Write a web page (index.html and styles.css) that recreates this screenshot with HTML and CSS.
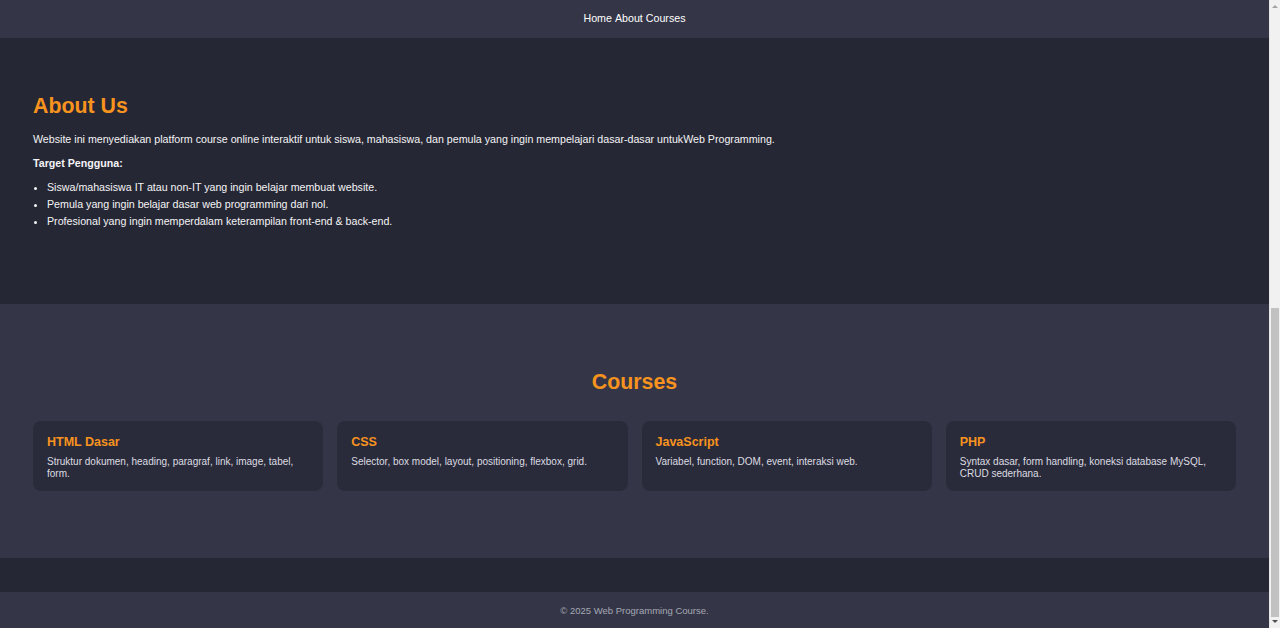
FILE: index.html
```html
<!DOCTYPE html>
<html lang="id">
<head>
<meta charset="utf-8">
<title>Web Programming Course</title>
<link rel="stylesheet" href="styles.css">
</head>
<body>
<div class="page">
  <header class="topbar">
    <nav class="nav">
      <a href="#home">Home</a>
      <a href="#about">About</a>
      <a href="#courses">Courses</a>
    </nav>
  </header>
  <main>
    <section class="about" id="about">
      <h2 class="section-title">About Us</h2>
      <p class="lead">Website ini menyediakan platform course online interaktif untuk siswa, mahasiswa, dan pemula yang ingin mempelajari dasar-dasar untukWeb Programming.</p>
      <p class="target"><strong>Target Pengguna:</strong></p>
      <ul class="target-list">
        <li>Siswa/mahasiswa IT atau non-IT yang ingin belajar membuat website.</li>
        <li>Pemula yang ingin belajar dasar web programming dari nol.</li>
        <li>Profesional yang ingin memperdalam keterampilan front-end &amp; back-end.</li>
      </ul>
    </section>
    <section class="courses" id="courses">
      <h2 class="section-title center">Courses</h2>
      <div class="course-grid">
        <article class="card">
          <h3>HTML Dasar</h3>
          <p>Struktur dokumen, heading, paragraf, link, image, tabel, form.</p>
        </article>
        <article class="card">
          <h3>CSS</h3>
          <p>Selector, box model, layout, positioning, flexbox, grid.</p>
        </article>
        <article class="card">
          <h3>JavaScript</h3>
          <p>Variabel, function, DOM, event, interaksi web.</p>
        </article>
        <article class="card">
          <h3>PHP</h3>
          <p>Syntax dasar, form handling, koneksi database MySQL, CRUD sederhana.</p>
        </article>
      </div>
    </section>
  </main>
  <footer class="footer">
    <p>&copy; 2025 Web Programming Course.</p>
  </footer>
</div>
<div class="scrollbar" aria-hidden="true">
  <span class="arrow up"></span>
  <span class="track-space"></span>
  <span class="thumb"></span>
  <span class="arrow down"></span>
</div>
</body>
</html>
```

FILE: styles.css
```css
* {
  box-sizing: border-box;
}
html, body {
  height: 100%;
  overflow: hidden;
}
body {
  margin: 0;
  display: flex;
  font-family: "Liberation Sans", Arial, sans-serif;
  font-size: 10.67px;
  line-height: 17px;
  color: #f4f4f6;
  background: #262734;
}
.page {
  flex: 1;
  min-width: 0;
  background: #262734;
}
.topbar {
  background: #343647;
  height: 38px;
  display: flex;
  align-items: center;
  justify-content: center;
}
.nav {
  display: flex;
  gap: 3px;
  padding-bottom: 2px;
}
.nav a {
  color: #ffffff;
  text-decoration: none;
  font-size: 10.67px;
}
.about {
  background: #262734;
  padding: 54px 33px 74px;
}
.section-title {
  margin: 0;
  font-size: 21.33px;
  line-height: 28px;
  font-weight: 700;
  color: #f7931e;
}
.section-title.center {
  text-align: center;
}
.lead {
  margin: 11px 0 0;
}
.target {
  margin: 7px 0 0;
}
.target-list {
  margin: 7px 0 0;
  padding-left: 14px;
}
.courses {
  background: #343647;
  padding: 64px 33px 67px;
}
.course-grid {
  margin-top: 25px;
  display: grid;
  grid-template-columns: repeat(4, 1fr);
  gap: 14px;
}
.card {
  background: #2a2b3a;
  border-radius: 8px;
  padding: 14px 14px 12px;
}
.card h3 {
  margin: 0 0 7px;
  font-size: 12.5px;
  line-height: 14.4px;
  color: #f7931e;
}
.card p {
  margin: 0;
  font-size: 10px;
  line-height: 11.5px;
  color: #dcdce2;
}
.footer {
  margin-top: 34px;
  background: #343647;
  height: 36px;
  display: flex;
  align-items: center;
  justify-content: center;
}
.footer p {
  margin: 0;
  font-size: 9.5px;
  color: #a6a8b4;
}
.scrollbar {
  width: 11px;
  flex: none;
  height: 100%;
  background: #f1f1f1;
  border-left: 1px solid #e6e6e6;
  display: flex;
  flex-direction: column;
  align-items: center;
}
.arrow {
  flex: none;
  width: 0;
  height: 0;
  border-left: 3px solid transparent;
  border-right: 3px solid transparent;
}
.arrow.up {
  margin-top: 5px;
  border-bottom: 3px solid #a3a3a3;
}
.arrow.down {
  margin: 3px 0 5px;
  border-top: 3px solid #505050;
}
.track-space {
  flex: 1;
}
.thumb {
  flex: none;
  width: 8px;
  height: 309px;
  background: #c1c1c1;
}
```
